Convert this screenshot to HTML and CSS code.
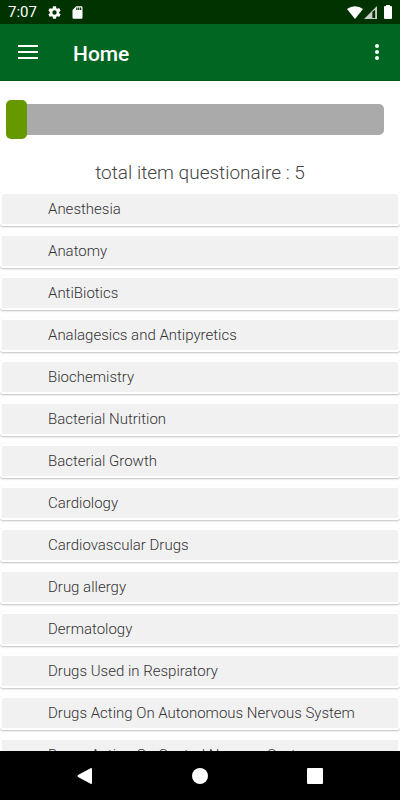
FILE: index.html
```html
<!DOCTYPE html>
<html lang="en">
<head>
    <meta charset="UTF-8">
    <meta name="viewport" content="width=device-width, initial-scale=1.0">
    <title>Home</title>
    <link rel="stylesheet" href="styles.css">
</head>
<body>
    <div class="status-bar">
        <span class="clock">7:07</span>
        <svg class="status-icon" viewBox="0 0 24 24"><path fill-rule="evenodd" d="M19.4 13a7.500 7.500 0 0 0 0-2l2.100-1.650a.5.5 0 0 0 .12-.64l-2-3.460a.5.5 0 0 0-.61-.22l-2.490 1a7.300 7.300 0 0 0-1.690-.98l-.38-2.650A.5.5 0 0 0 14 2h-4a.5.5 0 0 0-.49.42l-.38 2.650a7.700 7.700 0 0 0-1.690.98l-2.490-1a.5.5 0 0 0-.61.22l-2 3.460a.5.5 0 0 0 .12.640L4.600 11a7.900 7.900 0 0 0 0 2l-2.110 1.650a.5.5 0 0 0-.12.640l2 3.460c.12.220.39.300.61.220l2.490-1c.52.400 1.080.730 1.690.980l.38 2.650c.3.240.24.420.49.420h4c.25 0 .46-.18.490-.42l.38-2.650a7.700 7.700 0 0 0 1.690-.98l2.490 1c.23.090.49 0 .61-.22l2-3.460a.5.5 0 0 0-.12-.64zM12 15.500a3.500 3.500 0 1 1 0-7 3.500 3.500 0 0 1 0 7z"/></svg>
        <svg class="status-icon card-icon" viewBox="0 0 24 24"><path fill-rule="evenodd" d="M18 2h-8L4 8v12c0 1.100.9 2 2 2h12c1.100 0 2-.9 2-2V4c0-1.100-.9-2-2-2zm-6 6h-2V4h2zm3 0h-2V4h2zm3 0h-2V4h2z"/></svg>
        <div class="signals">
            <svg class="wifi" viewBox="0 0 16 13"><path d="M0 3a13 13 0 0 1 16 0L8 13z"/></svg>
            <svg class="cell" viewBox="0 0 14 14"><path fill="#ccc" d="M0 14L14 0v14z"/><path fill="#003300" d="M9 6.500V13h3V4z"/></svg>
            <svg class="battery" viewBox="0 0 8 14"><path d="M2 0h4v1h1q1 0 1 1v11q0 1-1 1H1q-1 0-1-1V2q0-1 1-1h1z"/></svg>
        </div>
    </div>

    <header class="app-bar">
        <button type="button" class="icon-button" aria-label="Menu">
            <svg width="20" height="14" viewBox="0 0 20 14"><path d="M0 0h20v2H0zM0 6h20v2H0zM0 12h20v2H0z"/></svg>
        </button>
        <h1>Home</h1>
        <button type="button" class="icon-button more-button" aria-label="More options">
            <svg width="4" height="16" viewBox="0 0 4 16"><circle cx="2" cy="2" r="2"/><circle cx="2" cy="8" r="2"/><circle cx="2" cy="14" r="2"/></svg>
        </button>
    </header>

    <div class="slider">
        <input type="range" id="itemCount" min="5" max="100" value="5">
    </div>
    <label class="total" for="itemCount">total item questionaire : <span id="itemTotal">5</span></label>

    <main class="topics">
        <button type="button" class="topic">Anesthesia</button>
        <button type="button" class="topic">Anatomy</button>
        <button type="button" class="topic">AntiBiotics</button>
        <button type="button" class="topic">Analagesics and Antipyretics</button>
        <button type="button" class="topic">Biochemistry</button>
        <button type="button" class="topic">Bacterial Nutrition</button>
        <button type="button" class="topic">Bacterial Growth</button>
        <button type="button" class="topic">Cardiology</button>
        <button type="button" class="topic">Cardiovascular Drugs</button>
        <button type="button" class="topic">Drug allergy</button>
        <button type="button" class="topic">Dermatology</button>
        <button type="button" class="topic">Drugs Used in Respiratory</button>
        <button type="button" class="topic">Drugs Acting On Autonomous Nervous System</button>
        <button type="button" class="topic">Drugs Acting On Central Nervous System</button>
    </main>

    <nav class="nav-bar">
        <button type="button" aria-label="Back"><svg width="16" height="16" viewBox="0 0 16 16"><path d="M14 0q1 0 1 1v14q0 1-1 1L1 9q-1-1 0-2z"/></svg></button>
        <button type="button" aria-label="Home"><svg width="16" height="16" viewBox="0 0 16 16"><circle cx="8" cy="8" r="8"/></svg></button>
        <button type="button" aria-label="Recent apps"><svg width="16" height="16" viewBox="0 0 16 16"><rect width="16" height="16" rx="1"/></svg></button>
    </nav>

    <script>
        var slider = document.getElementById('itemCount');
        slider.addEventListener('input', function () {
            document.getElementById('itemTotal').textContent = slider.value;
        });
    </script>
</body>
</html>
```
FILE: styles.css
```css
* {
    box-sizing: border-box;
}

body {
    display: flex;
    flex-direction: column;
    height: 100vh;
    margin: 0;
    background-color: #fff;
    font-family: Roboto, sans-serif;
}

button {
    border: none;
    padding: 0;
    background: none;
    font-family: inherit;
    cursor: pointer;
}

svg {
    display: block;
    fill: #fff;
}

.status-bar {
    display: flex;
    align-items: center;
    flex: none;
    height: 24px;
    padding: 0 8px;
    background-color: #003300;
    color: #fff;
}

.clock {
    font-size: 15px;
    line-height: 24px;
}

.status-icon {
    width: 15px;
    height: 15px;
    margin-left: 10px;
}

.card-icon {
    margin-left: 8px;
}

.signals {
    display: flex;
    align-items: center;
    margin-left: auto;
}

.wifi {
    width: 16px;
    height: 13px;
}

.cell {
    width: 13px;
    height: 13px;
    margin-left: 1px;
}

.battery {
    width: 8px;
    height: 14px;
    margin-left: 7px;
}

.app-bar {
    display: flex;
    align-items: center;
    flex: none;
    height: 57px;
    padding: 0 4px;
    background-color: #006622;
    border-bottom: 1px solid #00591a;
}

.icon-button {
    display: flex;
    align-items: center;
    justify-content: center;
    width: 48px;
    height: 48px;
}

.more-button {
    width: 38px;
    margin-left: auto;
}

.app-bar h1 {
    margin: 0 0 0 21px;
    padding-top: 4px;
    color: #fff;
    font-size: 21px;
    font-weight: 500;
    line-height: 24px;
}

.slider {
    flex: none;
    padding: 19px 16px 0 6px;
}

.slider input {
    display: block;
    width: 100%;
    height: 39px;
    margin: 0;
    background: none;
    appearance: none;
}

.slider input::-webkit-slider-runnable-track {
    height: 31px;
    border-radius: 5px;
    background-color: #aaa;
}

.slider input::-webkit-slider-thumb {
    width: 21px;
    height: 39px;
    margin-top: -4px;
    border-radius: 5px;
    background-color: #669900;
    appearance: none;
}

.total {
    flex: none;
    padding: 22px 0 7px;
    color: #444;
    font-size: 19px;
    font-weight: 300;
    line-height: 24px;
    text-align: center;
}

.topics {
    display: flex;
    flex: 1;
    flex-direction: column;
    gap: 8px;
    min-height: 0;
    overflow-y: auto;
    scrollbar-width: none;
}

.topic {
    flex: none;
    height: 34px;
    padding: 0 46px;
    border: 2px solid #fff;
    border-radius: 3px;
    background-color: #f1f1f1;
    box-shadow: 0 1px 2px rgba(0, 0, 0, 0.25);
    color: #333;
    font-size: 15px;
    font-weight: 300;
    line-height: 20px;
    text-align: left;
    white-space: nowrap;
}

.nav-bar {
    display: flex;
    align-items: center;
    justify-content: center;
    flex: none;
    gap: 67px;
    height: 49px;
    background-color: #000;
}

.nav-bar button {
    display: flex;
    align-items: center;
    justify-content: center;
    width: 48px;
    height: 48px;
}
```
